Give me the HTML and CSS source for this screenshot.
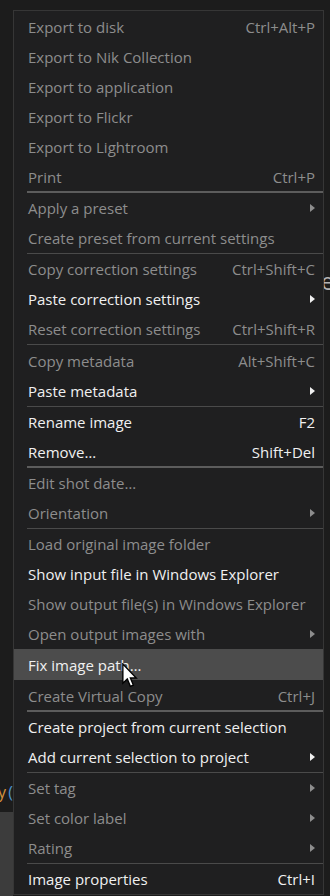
FILE: index.html
```html
<!DOCTYPE html>
<html lang="en">
<head>
    <meta charset="UTF-8">
    <meta name="viewport" content="width=device-width, initial-scale=1.0">
    <title>Context Menu</title>
    <link rel="stylesheet" href="styles.css">
</head>

<body>
    <div class="side-left">
        <div class="code-line"><span class="kw">y</span> <span class="paren">(</span></div>
        <div class="panel-gray"></div>
    </div>

    <div class="menu">
        <div class="item off"><span>Export to disk</span><span class="key">Ctrl+Alt+P</span></div>
        <div class="item off"><span>Export to Nik Collection</span></div>
        <div class="item off"><span>Export to application</span></div>
        <div class="item off"><span>Export to Flickr</span></div>
        <div class="item off"><span>Export to Lightroom</span></div>
        <div class="item off"><span>Print</span><span class="key">Ctrl+P</span></div>
        <div class="sep thick"></div>
        <div class="item off"><span>Apply a preset</span><span class="arrow"></span></div>
        <div class="item off"><span>Create preset from current settings</span></div>
        <div class="sep"></div>
        <div class="item off"><span>Copy correction settings</span><span class="key">Ctrl+Shift+C</span></div>
        <div class="item"><span>Paste correction settings</span><span class="arrow"></span></div>
        <div class="item off"><span>Reset correction settings</span><span class="key">Ctrl+Shift+R</span></div>
        <div class="sep gap"></div>
        <div class="item off"><span>Copy metadata</span><span class="key">Alt+Shift+C</span></div>
        <div class="item"><span>Paste metadata</span><span class="arrow"></span></div>
        <div class="sep"></div>
        <div class="item"><span>Rename image</span><span class="key">F2</span></div>
        <div class="item"><span>Remove…</span><span class="key">Shift+Del</span></div>
        <div class="sep thick"></div>
        <div class="item off"><span>Edit shot date…</span></div>
        <div class="item off"><span>Orientation</span><span class="arrow"></span></div>
        <div class="sep"></div>
        <div class="item off"><span>Load original image folder</span></div>
        <div class="item"><span>Show input file in Windows Explorer</span></div>
        <div class="item off"><span>Show output file(s) in Windows Explorer</span></div>
        <div class="item off"><span>Open output images with</span><span class="arrow"></span></div>
        <div class="item hover">
            <span>Fix image path…</span>
            <svg class="cursor" width="16" height="25" viewBox="0 0 13 20">
                <path d="M0.7 0.7 V16.2 L4.3 12.8 L6.8 18.8 L9.2 17.8 L6.8 12 H11.6 Z" fill="#fff" stroke="#000" stroke-width="1.1" stroke-linejoin="miter"/>
            </svg>
        </div>
        <div class="item off after-hover"><span>Create Virtual Copy</span><span class="key">Ctrl+J</span></div>
        <div class="sep thick"></div>
        <div class="item"><span>Create project from current selection</span></div>
        <div class="item"><span>Add current selection to project</span><span class="arrow"></span></div>
        <div class="sep"></div>
        <div class="item off"><span>Set tag</span><span class="arrow"></span></div>
        <div class="item off"><span>Set color label</span><span class="arrow"></span></div>
        <div class="item off"><span>Rating</span><span class="arrow"></span></div>
        <div class="sep"></div>
        <div class="item"><span>Image properties</span><span class="key">Ctrl+I</span></div>
    </div>

    <div class="side-right">
        <div class="peek">e</div>
    </div>
</body>
</html>
```

FILE: styles.css
```css
body {
    margin: 0;
    height: 896px;
    overflow: hidden;
    background: #1c1c1c;
    display: flex;
    align-items: flex-start;
    font-family: "Open Sans", "Noto Sans", sans-serif;
    font-size: 15px;
}

/* bits of the app behind the menu */
.side-left {
    width: 13px;
    height: 896px;
    display: flex;
    flex-direction: column;
    overflow: hidden;
}

.code-line {
    margin-top: 782px;
    height: 30px;
    margin-left: -2px;
    white-space: nowrap;
    font-size: 16px;
    line-height: 20px;
    letter-spacing: -1px;
}

.kw {
    color: #d7923f;
}

.paren {
    color: #4e94ce;
}

.panel-gray {
    flex: 1;
    background: #3c3c3c;
}

.side-right {
    width: 6px;
    height: 896px;
    overflow: hidden;
}

.peek {
    margin-top: 266px;
    margin-left: -3px;
    color: #b4b4b4;
    font-size: 23px;
    line-height: 30px;
}

/* the context menu */
.menu {
    margin-top: 10px;
    width: 309px;
    border: 1px solid #363636;
    background: #1f1f20;
    padding: 1px 0 0;
}

.item {
    height: 30px;
    display: flex;
    align-items: center;
    justify-content: space-between;
    padding: 0 8px 0 14px;
    color: #f0f0f0;
    white-space: nowrap;
    position: relative;
}

.item.off {
    color: #8d8d8d;
}

.item.hover {
    height: 31px;
    background: #4c4c4c;
}

.item.after-hover {
    margin-top: 1px;
}

.arrow {
    width: 0;
    height: 0;
    border-top: 4.5px solid transparent;
    border-bottom: 4.5px solid transparent;
    border-left: 5px solid #f0f0f0;
}

.item.off .arrow {
    border-left-color: #8d8d8d;
}

.sep {
    height: 1px;
    margin-left: 13px;
    background: #4a4a4a;
}

.sep.gap {
    margin-bottom: 1px;
}

.sep.thick {
    height: 2px;
    margin-top: -1px;
    background: #5c5c5c;
}

.cursor {
    position: absolute;
    left: 108px;
    top: 14px;
}
```
